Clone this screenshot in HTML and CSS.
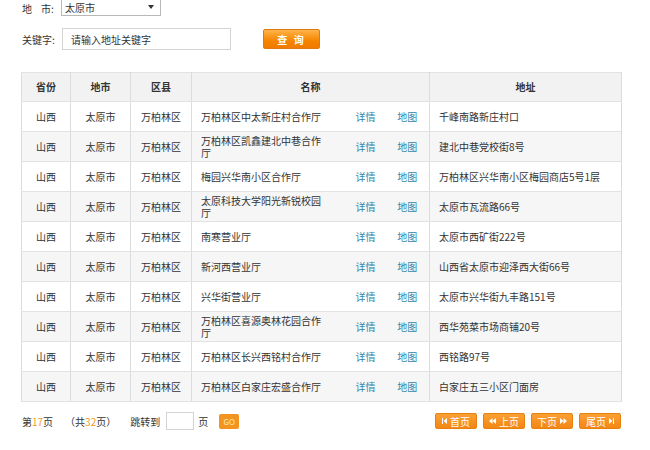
FILE: index.html
```html
<!DOCTYPE html>
<html lang="zh-CN">
<head>
<meta charset="utf-8">
<title>营业厅查询</title>
<link rel="stylesheet" href="styles.css">
</head>
<body>
<div class="page">
  <div class="filter-row city-row">
    <span class="label">地<span class="gap"></span>市:</span>
    <div class="select"><span class="select-text">太原市</span><span class="caret"></span></div>
  </div>
  <div class="filter-row kw-row">
    <span class="label">关键字:</span>
    <input class="kw-input" type="text" value="请输入地址关键字">
    <button class="search-btn">查&nbsp;询</button>
  </div>

  <table class="grid">
    <colgroup>
      <col class="c-prov"><col class="c-city"><col class="c-dist"><col class="c-name"><col class="c-det"><col class="c-map"><col class="c-addr">
    </colgroup>
    <thead>
      <tr><th>省份</th><th>地市</th><th>区县</th><th colspan="3">名称</th><th>地址</th></tr>
    </thead>
    <tbody>
      <tr><td>山西</td><td>太原市</td><td>万柏林区</td><td class="name">万柏林区中太新庄村合作厅</td><td><a>详情</a></td><td><a>地图</a></td><td class="addr">千峰南路新庄村口</td></tr>
      <tr><td>山西</td><td>太原市</td><td>万柏林区</td><td class="name">万柏林区凯鑫建北中巷合作厅</td><td><a>详情</a></td><td><a>地图</a></td><td class="addr">建北中巷党校街8号</td></tr>
      <tr><td>山西</td><td>太原市</td><td>万柏林区</td><td class="name">梅园兴华南小区合作厅</td><td><a>详情</a></td><td><a>地图</a></td><td class="addr">万柏林区兴华南小区梅园商店5号1层</td></tr>
      <tr><td>山西</td><td>太原市</td><td>万柏林区</td><td class="name">太原科技大学阳光新锐校园厅</td><td><a>详情</a></td><td><a>地图</a></td><td class="addr">太原市瓦流路66号</td></tr>
      <tr><td>山西</td><td>太原市</td><td>万柏林区</td><td class="name">南寒营业厅</td><td><a>详情</a></td><td><a>地图</a></td><td class="addr">太原市西矿街222号</td></tr>
      <tr><td>山西</td><td>太原市</td><td>万柏林区</td><td class="name">新河西营业厅</td><td><a>详情</a></td><td><a>地图</a></td><td class="addr">山西省太原市迎泽西大街66号</td></tr>
      <tr><td>山西</td><td>太原市</td><td>万柏林区</td><td class="name">兴华街营业厅</td><td><a>详情</a></td><td><a>地图</a></td><td class="addr">太原市兴华街九丰路151号</td></tr>
      <tr><td>山西</td><td>太原市</td><td>万柏林区</td><td class="name">万柏林区喜源奥林花园合作厅</td><td><a>详情</a></td><td><a>地图</a></td><td class="addr">西华苑菜市场商铺20号</td></tr>
      <tr><td>山西</td><td>太原市</td><td>万柏林区</td><td class="name">万柏林区长兴西铭村合作厅</td><td><a>详情</a></td><td><a>地图</a></td><td class="addr">西铭路97号</td></tr>
      <tr><td>山西</td><td>太原市</td><td>万柏林区</td><td class="name">万柏林区白家庄宏盛合作厅</td><td><a>详情</a></td><td><a>地图</a></td><td class="addr">白家庄五三小区门面房</td></tr>
    </tbody>
  </table>

  <div class="pager">
    <div class="pager-info">
      <span>第<em>17</em>页</span>
      <span class="total">（共<em>32</em>页）</span>
      <span class="jump">跳转到</span>
      <input class="jump-input" type="text">
      <span>页</span>
      <button class="go-btn">GO</button>
    </div>
    <div class="pager-btns">
      <button class="pg-btn"><svg width="5" height="6" viewBox="0 0 5 6"><rect x="0" y="0" width="1" height="6" fill="#fff"/><path d="M5 0 L1.5 3 L5 6Z" fill="#fff"/></svg>首页</button>
      <button class="pg-btn"><svg width="7" height="6" viewBox="0 0 7 6"><path d="M3.5 0 L0 3 L3.5 6Z M7 0 L3.5 3 L7 6Z" fill="#fff"/></svg>上页</button>
      <button class="pg-btn">下页<svg width="7" height="6" viewBox="0 0 7 6"><path d="M0 0 L3.5 3 L0 6Z M3.5 0 L7 3 L3.5 6Z" fill="#fff"/></svg></button>
      <button class="pg-btn">尾页<svg width="5" height="6" viewBox="0 0 5 6"><path d="M0 0 L3.5 3 L0 6Z" fill="#fff"/><rect x="4" y="0" width="1" height="6" fill="#fff"/></svg></button>
    </div>
  </div>
</div>
</body>
</html>
```

FILE: styles.css
```css
* { box-sizing: border-box; }
html, body { margin: 0; padding: 0; background: #fff; }
body {
  font-family: "Noto Sans CJK SC", "Liberation Sans", sans-serif;
  font-size: 10px;
  color: #333;
}
.page { padding: 0 0 0 21px; width: 621px; }

.filter-row { display: flex; align-items: center; }
.label { width: 40px; padding-left: 1px; color: #333; white-space: nowrap; }
.gap { display: inline-block; width: 9px; }

.city-row { height: 16px; }
.select {
  width: 100px; height: 17px; margin-top: -2px;
  border: 1px solid #b8b8b8; border-top-color: #ddd;
  display: flex; align-items: center; justify-content: space-between;
  padding: 0 4px 0 3px; background: #fff;
}
.caret {
  width: 0; height: 0;
  border-left: 3px solid transparent; border-right: 3px solid transparent;
  border-top: 4px solid #333; margin-right: 2px;
}

.kw-row { margin-top: 12px; height: 22px; }
.kw-input {
  width: 169px; height: 22px; margin: 0 0 0 1px;
  border: 1px solid #d4d4d4; padding: 0 0 0 8px;
  font: inherit; color: #333; outline: none;
}
.search-btn {
  margin-left: 32px; width: 57px; height: 20px;
  border: 1px solid #e07a10; border-radius: 2px;
  background: linear-gradient(#ffb44a, #f68400 60%, #f07a00);
  color: #fff; font: inherit; font-weight: bold; padding: 0;
  letter-spacing: 2px;
}

.grid {
  margin-top: 22px;
  width: 600px; border-collapse: collapse; table-layout: fixed;
  border: 1px solid #d8d8d8;
}
.c-prov { width: 49px; } .c-city { width: 60px; } .c-dist { width: 61px; }
.c-name { width: 154px; } .c-det { width: 40px; } .c-map { width: 44px; } .c-addr { width: 192px; }
.grid th, .grid td {
  border-top: 1px solid #e2e2e2; border-bottom: 1px solid #e2e2e2;
  text-align: center; padding: 0; line-height: 12px;
}
.grid th { height: 29px; background: #f2f2f2; font-weight: bold; color: #333; border-left: 1px solid #dcdcdc; border-right: 1px solid #dcdcdc; }
.grid td { height: 30px; }
.grid td:nth-child(1), .grid td:nth-child(2), .grid td:nth-child(3), .grid td:nth-child(4), .grid td:nth-child(7) {
  border-left: 1px solid #dcdcdc;
}
.grid tbody tr:nth-child(even) td { background: #f6f6f6; }
.grid td.name { text-align: left; padding: 0 20px 0 9px; }
.grid td.addr { text-align: left; padding: 0 4px 0 9px; }
.grid a { color: #3487a8; text-decoration: none; }

.pager {
  margin-top: 10px; width: 600px;
  display: flex; justify-content: space-between; align-items: center;
}
.pager-info { display: flex; align-items: center; padding-left: 1px; }
.pager-info em { font-style: normal; color: #f39a1e; }
.total { margin-left: 12px; }
.jump { margin-left: 14px; }
.jump-input { width: 28px; height: 18px; margin: 0 4px 0 6px; border: 1px solid #d4d4d4; padding: 0; }
.go-btn {
  margin-left: 11px; width: 20px; height: 15px; padding: 0;
  border: none; border-radius: 2px; background: #f39420; color: #ffe8b0;
  font: inherit; font-size: 8px;
}
.pager-btns { display: flex; gap: 6px; }
.pg-btn {
  width: 42px; height: 16px; padding: 0;
  border: 1px solid #e8800c; border-radius: 2px;
  background: linear-gradient(#fba036, #f28614);
  color: #fff; font: inherit;
  display: flex; align-items: center; justify-content: center; gap: 3px;
}
.pg-btn svg { display: block; }
```
